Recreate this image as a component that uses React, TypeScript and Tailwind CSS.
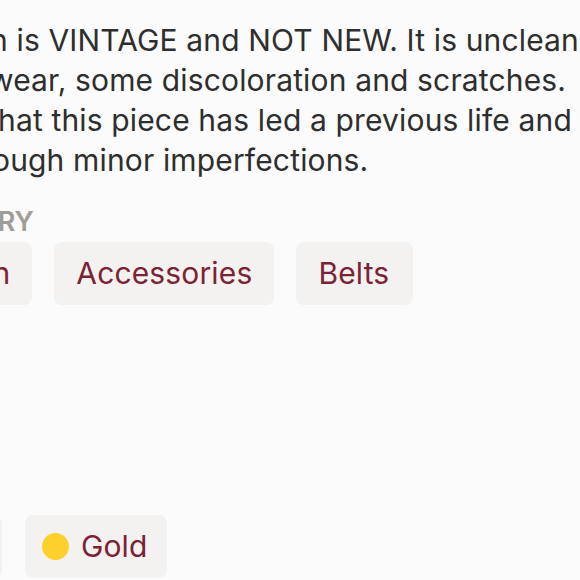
const lines = [
  { text: 'n is VINTAGE and NOT NEW. It is uncleaned', cls: 'ml-[-10px]' },
  { text: 'wear, some discoloration and scratches.', cls: 'ml-[-11px]' },
  { text: 'hat this piece has led a previous life and', cls: 'ml-[-2px]' },
  { text: 'ough minor imperfections.', cls: 'ml-[-8px]' },
];

const Chip = ({ label, dot, className = '' }: { label: string; dot?: string; className?: string }) => (
  <div
    className={`flex h-[63px] shrink-0 items-center gap-[12px] rounded-[8px] bg-[#f4f2f0] px-[22px] text-[30px] tracking-[0.15px] text-[#7b2335] ${className}`}
  >
    {dot && <span className={`h-[27px] w-[27px] rounded-full ${dot}`} />}
    <span>{label}</span>
  </div>
);

export default function App() {
  return (
    <div
      className="h-[580px] w-[580px] overflow-hidden bg-[#fbfbfb] pt-[20px]"
      style={{ fontFamily: 'Inter, "Open Sans", sans-serif' }}
    >
      <div className="flex flex-col items-start text-[30px] leading-[40px] tracking-[0.15px] text-[#2e2e2e]">
        {lines.map((l) => (
          <div key={l.text} className={`whitespace-nowrap ${l.cls}`}>
            {l.text}
          </div>
        ))}
      </div>

      <div className="ml-[-114px] mt-[24px] whitespace-nowrap text-[27px] font-semibold leading-[36px] text-[#a09c98]">
        CATEGORY
      </div>
      <div className="mt-[2px] flex ml-[-120px] gap-[22px]">
        <Chip label="Women" />
        <Chip label="Accessories" />
        <Chip label="Belts" className="pr-[24px]" />
      </div>

      <div className="ml-[-140px] mt-[171px] whitespace-nowrap text-[27px] font-semibold leading-[36px] text-[#a09c98]">
        COLOR
      </div>
      <div className="mt-[3px] flex ml-[-164px] gap-[23px]">
        <Chip label="Brown" dot="bg-[#8a5a3c]" className="pl-[17px] pr-[19px]" />
        <Chip label="Gold" dot="bg-[#fdd02c]" className="pl-[17px] pr-[19px]" />
      </div>
    </div>
  );
}
